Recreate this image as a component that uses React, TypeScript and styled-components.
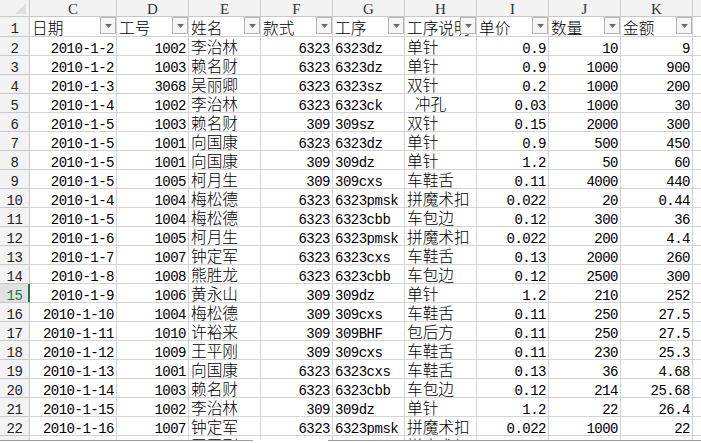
import React from "react";
import styled, { createGlobalStyle, css } from "styled-components";

const GlobalStyle = createGlobalStyle`
  html, body {
    margin: 0;
    padding: 0;
    background: #ffffff;
    overflow: hidden;
  }
`;

const GRID = "#d4d4d4";
const HEAD_BG = "#f3f3f3";
const HEAD_LINE = "#c8c8c8";
const GREEN = "#217346";

const LATIN = `"Liberation Mono", "DejaVu Sans Mono", monospace`;
const SERIF = `"Liberation Serif", "DejaVu Serif", serif`;
const CJK = `"Noto Sans CJK SC", "Noto Sans CJK JP", sans-serif`;

const Frame = styled.div`
  width: 701px;
  height: 443px;
  overflow: hidden;
  display: flex;
  flex-direction: column;
  background: #fff;
`;

const Sheet = styled.div`
  flex: 1;
  overflow: hidden;
  display: grid;
  grid-template-columns: 30px 87px repeat(9, 72px);
  grid-template-rows: 17px 20px;
  grid-auto-rows: 19px;
`;

const Corner = styled.div`
  background: ${HEAD_BG};
  border-right: 1px solid ${HEAD_LINE};
  border-bottom: 1px solid ${HEAD_LINE};
  display: flex;
  align-items: flex-end;
  justify-content: flex-end;
  padding: 0 3px 2px 0;
  box-sizing: border-box;
`;

const ColHead = styled.div`
  background: ${HEAD_BG};
  border-right: 1px solid ${HEAD_LINE};
  border-bottom: 1px solid ${HEAD_LINE};
  box-sizing: border-box;
  font-family: ${SERIF};
  font-size: 15px;
  line-height: 15px;
  color: #333;
  text-align: center;
  padding-top: 2px;
  overflow: hidden;
`;

const RowHead = styled.div<{ $active?: boolean }>`
  background: ${(p) => (p.$active ? "#e1e1e1" : HEAD_BG)};
  border-right: 1px solid ${(p) => (p.$active ? GREEN : HEAD_LINE)};
  border-bottom: 1px solid ${HEAD_LINE};
  box-shadow: ${(p) => (p.$active ? `inset -1px 0 0 ${GREEN}` : "none")};
  box-sizing: border-box;
  font-family: ${LATIN};
  font-size: 14px;
  line-height: 14px;
  letter-spacing: -0.5px;
  color: ${(p) => (p.$active ? GREEN : "#222")};
  text-align: center;
  padding-top: 5px;
  overflow: hidden;
`;

const Cell = styled.div<{ $right?: boolean; $cjk?: boolean; $tall?: boolean }>`
  position: relative;
  border-right: 1px solid ${GRID};
  border-bottom: 1px solid ${GRID};
  box-sizing: border-box;
  overflow: hidden;
  white-space: nowrap;
  color: #000;
  text-align: ${(p) => (p.$right ? "right" : "left")};
  padding-left: 2px;
  padding-right: 2px;
  ${(p) =>
    p.$cjk
      ? css`
          font-family: ${CJK};
          font-size: 15.7px;
          font-weight: 300;
          line-height: 15.7px;
          padding-top: ${p.$tall ? 3 : 2}px;
        `
      : css`
          font-family: ${LATIN};
          font-size: 14px;
          line-height: 14px;
          letter-spacing: -0.5px;
          padding-top: 5px;
        `}
`;

const FilterButton = styled.div`
  position: absolute;
  right: 0;
  top: 0;
  width: 16px;
  height: 17px;
  box-sizing: border-box;
  border: 1px solid #b4b4b4;
  background: #f6f6f6;
  display: flex;
  align-items: center;
  justify-content: center;
`;

const TabBar = styled.div`
  height: 3px;
  display: flex;
  flex: none;
`;

const TabStrip = styled.div<{ $w?: number; $active?: boolean }>`
  ${(p) => (p.$w ? `width: ${p.$w}px; flex: none;` : "flex: 1;")}
  border-top: 1px solid ${(p) => (p.$active ? "transparent" : "#9b9b9b")};
  background: #fff;
`;

type Row = [string, string, string, string, string, string, string, string, string];

const headers = ["日期", "工号", "姓名", "款式", "工序", "工序说明", "单价", "数量", "金额"];
const letters = ["C", "D", "E", "F", "G", "H", "I", "J", "K", "L"];
const kinds: Array<"num" | "cjk" | "latin"> = ["num", "num", "cjk", "num", "latin", "cjk", "num", "num", "num"];

const rows: Row[] = [
  ["2010-1-2", "1002", "李治林", "6323", "6323dz", "单针", "0.9", "10", "9"],
  ["2010-1-2", "1003", "赖名财", "6323", "6323dz", "单针", "0.9", "1000", "900"],
  ["2010-1-3", "3068", "吴丽卿", "6323", "6323sz", "双针", "0.2", "1000", "200"],
  ["2010-1-4", "1002", "李治林", "6323", "6323ck", "\u2002冲孔", "0.03", "1000", "30"],
  ["2010-1-5", "1003", "赖名财", "309", "309sz", "双针", "0.15", "2000", "300"],
  ["2010-1-5", "1001", "向国康", "6323", "6323dz", "单针", "0.9", "500", "450"],
  ["2010-1-5", "1001", "向国康", "309", "309dz", "单针", "1.2", "50", "60"],
  ["2010-1-5", "1005", "柯月生", "309", "309cxs", "车鞋舌", "0.11", "4000", "440"],
  ["2010-1-4", "1004", "梅松德", "6323", "6323pmsk", "拼魔术扣", "0.022", "20", "0.44"],
  ["2010-1-5", "1004", "梅松德", "6323", "6323cbb", "车包边", "0.12", "300", "36"],
  ["2010-1-6", "1005", "柯月生", "6323", "6323pmsk", "拼魔术扣", "0.022", "200", "4.4"],
  ["2010-1-7", "1007", "钟定军", "6323", "6323cxs", "车鞋舌", "0.13", "2000", "260"],
  ["2010-1-8", "1008", "熊胜龙", "6323", "6323cbb", "车包边", "0.12", "2500", "300"],
  ["2010-1-9", "1006", "黄永山", "309", "309dz", "单针", "1.2", "210", "252"],
  ["2010-1-10", "1004", "梅松德", "309", "309cxs", "车鞋舌", "0.11", "250", "27.5"],
  ["2010-1-11", "1010", "许裕来", "309", "309BHF", "包后方", "0.11", "250", "27.5"],
  ["2010-1-12", "1009", "王平刚", "309", "309cxs", "车鞋舌", "0.11", "230", "25.3"],
  ["2010-1-13", "1001", "向国康", "6323", "6323cxs", "车鞋舌", "0.13", "36", "4.68"],
  ["2010-1-14", "1003", "赖名财", "6323", "6323cbb", "车包边", "0.12", "214", "25.68"],
  ["2010-1-15", "1002", "李治林", "309", "309dz", "单针", "1.2", "22", "26.4"],
  ["2010-1-16", "1007", "钟定军", "6323", "6323pmsk", "拼魔术扣", "0.022", "1000", "22"],
  ["2010-1-17", "1009", "王平刚", "6323", "6323pmsk", "拼魔术扣", "0.022", "1000", "22"],
];

const CornerMark = () => (
  <svg width="11" height="11" viewBox="0 0 11 11">
    <polygon points="11,0 11,11 0,11" fill="#dfdfdf" />
  </svg>
);

const DropArrow = () => (
  <svg width="7" height="4" viewBox="0 0 7 4">
    <polygon points="0,0 7,0 3.5,4" fill="#6a6a6a" />
  </svg>
);

export default function App() {
  return (
    <Frame>
      <GlobalStyle />
      <Sheet>
        <Corner>
          <CornerMark />
        </Corner>
        {letters.map((l) => (
          <ColHead key={l}>{l}</ColHead>
        ))}

        <RowHead>1</RowHead>
        {headers.map((h) => (
          <Cell key={h} $cjk $tall>
            {h}
            <FilterButton>
              <DropArrow />
            </FilterButton>
          </Cell>
        ))}
        <Cell />

        {rows.map((r, i) => {
          const n = i + 2;
          return (
            <React.Fragment key={n}>
              <RowHead $active={n === 15}>{n}</RowHead>
              {r.map((v, j) => (
                <Cell key={j} $right={kinds[j] === "num"} $cjk={kinds[j] === "cjk"}>
                  {v}
                </Cell>
              ))}
              <Cell />
            </React.Fragment>
          );
        })}
      </Sheet>
      <TabBar>
        <TabStrip $w={253} />
        <TabStrip $w={75} $active />
        <TabStrip />
      </TabBar>
    </Frame>
  );
}
